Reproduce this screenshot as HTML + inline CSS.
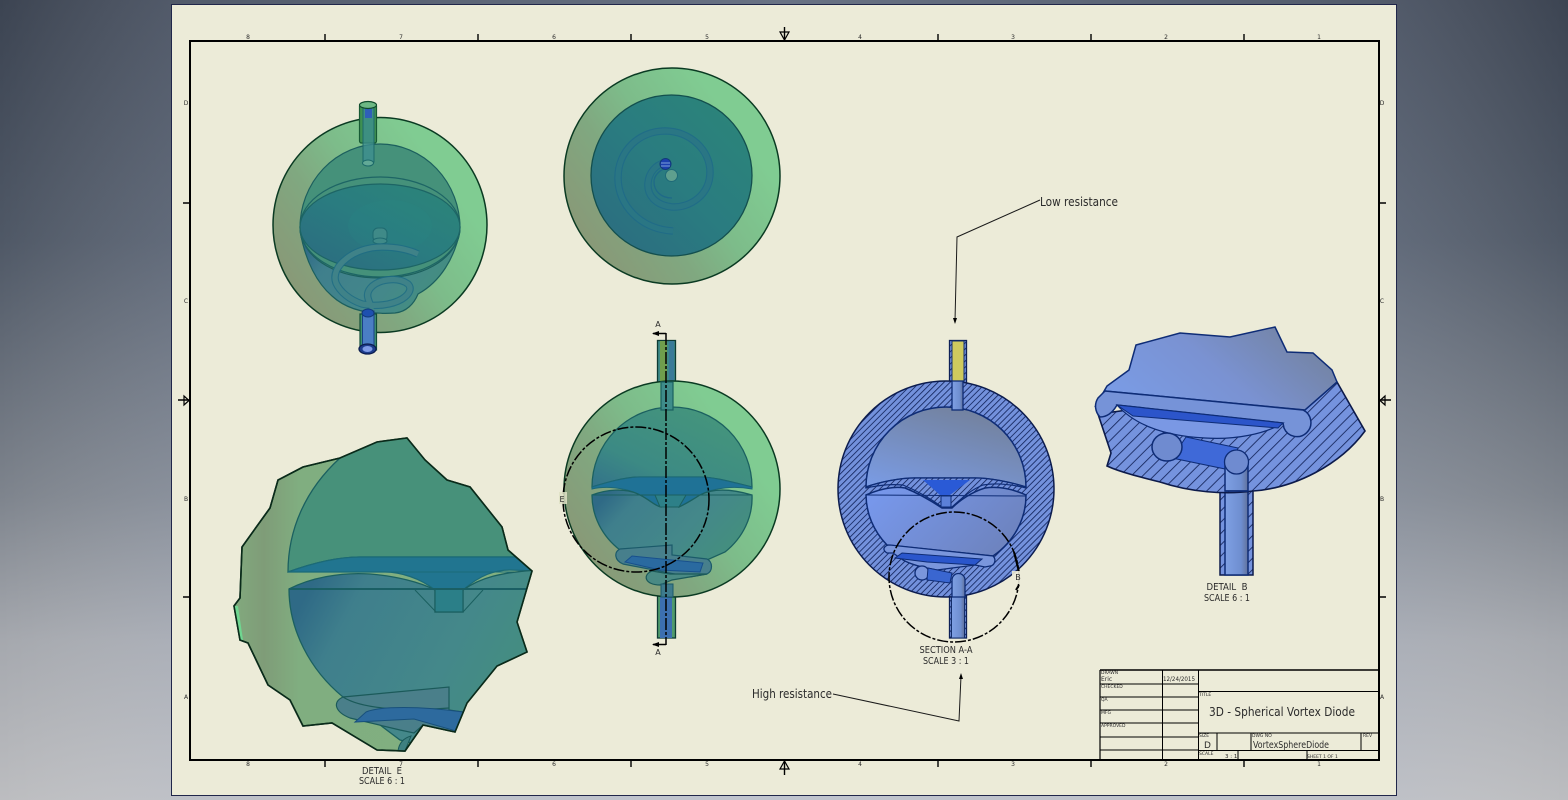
<!DOCTYPE html>
<html><head><meta charset="utf-8"><style>
html,body{margin:0;padding:0;width:1568px;height:800px;overflow:hidden;background:#7f848c}
svg{display:block;position:absolute;left:0;top:0;filter:blur(.3px)}
text{font-family:"DejaVu Sans","Liberation Sans",sans-serif;fill:#2b2b2b}
</style></head><body>
<svg width="1568" height="800" viewBox="0 0 1568 800" xmlns="http://www.w3.org/2000/svg">
<defs>
<linearGradient id="bgv" x1="0" y1="0" x2="0" y2="1"><stop offset="0" stop-color="#3c4452"/><stop offset=".3" stop-color="#4f5866"/><stop offset=".62" stop-color="#7e848d"/><stop offset=".8" stop-color="#a5a8ae"/><stop offset="1" stop-color="#bcbdc0"/></linearGradient>
<linearGradient id="bgh" x1="0" y1="0" x2="1" y2="0"><stop offset="0" stop-color="#fff" stop-opacity="0"/><stop offset=".12" stop-color="#c8d4ee" stop-opacity=".16"/><stop offset=".5" stop-color="#c8d4ee" stop-opacity=".32"/><stop offset=".88" stop-color="#c8d4ee" stop-opacity=".16"/><stop offset="1" stop-color="#fff" stop-opacity="0"/></linearGradient>
<linearGradient id="outer" x1=".05" y1=".7" x2=".75" y2=".2"><stop offset="0" stop-color="#889a78"/><stop offset=".35" stop-color="#80a880"/><stop offset=".62" stop-color="#7dbc8a"/><stop offset="1" stop-color="#80cc92"/></linearGradient>
<linearGradient id="inner" x1="0" y1="1" x2="1" y2="0"><stop offset="0" stop-color="#2c6a80"/><stop offset=".5" stop-color="#2a7c80"/><stop offset="1" stop-color="#2c8678"/></linearGradient>
<linearGradient id="dome" x1="0" y1="1" x2="1" y2="0"><stop offset="0" stop-color="#33728a"/><stop offset=".3" stop-color="#3c8a84"/><stop offset="1" stop-color="#47987a"/></linearGradient>
<linearGradient id="bowl" x1="0" y1=".3" x2="1" y2=".7"><stop offset="0" stop-color="#2f6a86"/><stop offset=".18" stop-color="#3f7f8c"/><stop offset=".6" stop-color="#44888a"/><stop offset="1" stop-color="#44907c"/></linearGradient>
<linearGradient id="detE" x1="0" y1="0" x2="1" y2="0"><stop offset="0" stop-color="#82aa7e"/><stop offset=".1" stop-color="#7f9c78"/><stop offset=".22" stop-color="#80ae80"/><stop offset="1" stop-color="#82b080"/></linearGradient>
<linearGradient id="blueT" x1="0" y1=".7" x2="1" y2=".3"><stop offset="0" stop-color="#7a9ce6"/><stop offset=".5" stop-color="#7a92d2"/><stop offset="1" stop-color="#73829f"/></linearGradient>
<linearGradient id="blueTS" x1="0" y1="1" x2=".6" y2="0"><stop offset="0" stop-color="#7a9ce6"/><stop offset="1" stop-color="#73829f"/></linearGradient>
<linearGradient id="blueB" x1="0" y1=".3" x2="1" y2=".7"><stop offset="0" stop-color="#7797ea"/><stop offset="1" stop-color="#6d82bc"/></linearGradient>
<linearGradient id="tube" x1="0" y1="0" x2="1" y2="0"><stop offset="0" stop-color="#7fa0e4"/><stop offset=".7" stop-color="#6e8ed0"/><stop offset="1" stop-color="#61719a"/></linearGradient>
<pattern id="h5" width="4.300" height="4.300" patternUnits="userSpaceOnUse" patternTransform="rotate(45)"><rect width="4.300" height="4.300" fill="#7391dc"/><rect width=".85" height="4.300" fill="#14265e"/></pattern>
<pattern id="h10" width="8" height="8" patternUnits="userSpaceOnUse" patternTransform="rotate(45)"><rect width="8" height="8" fill="#7593de"/><rect width=".85" height="8" fill="#14245a"/></pattern>
</defs>

<!-- background -->
<rect width="1568" height="800" fill="url(#bgv)"/>
<rect width="1568" height="800" fill="url(#bgh)"/>

<!-- sheet -->
<rect x="171.5" y="4.5" width="1225" height="791" fill="#ecebd8" stroke="#20264a" stroke-width="1"/>

<!-- frame -->
<rect x="190" y="41" width="1189" height="719" fill="none" stroke="#000" stroke-width="2"/>
<g stroke="#000" stroke-width="1.4" fill="none">
<path d="M325 34V41M478 34V41M631 34V41M938 34V41M1091 34V41M1244 34V41"/>
<path d="M325 760V767M478 760V767M631 760V767M938 760V767M1091 760V767M1244 760V767"/>
<path d="M183 203H190M183 597H190M1379 203H1386M1379 597H1386"/>
<path d="M784.500 27V41M784.500 760V775M178 400H190M1379 400H1391"/>
<path d="M780 32H789L784.500 40ZM780 769H789L784.500 761ZM184 396V405L189 400.500ZM1385 396V405L1380 400.500Z" stroke-width="1.2"/>
</g>
<g font-size="6" text-anchor="middle">
<text x="248" y="39">8</text><text x="401" y="39">7</text><text x="554" y="39">6</text><text x="707" y="39">5</text><text x="860" y="39">4</text><text x="1013" y="39">3</text><text x="1166" y="39">2</text><text x="1319" y="39">1</text>
<text x="248" y="766">8</text><text x="401" y="766">7</text><text x="554" y="766">6</text><text x="707" y="766">5</text><text x="860" y="766">4</text><text x="1013" y="766">3</text><text x="1166" y="766">2</text><text x="1319" y="766">1</text>
<text x="186" y="105">D</text><text x="186" y="303">C</text><text x="186" y="501">B</text><text x="186" y="699">A</text>
<text x="1382" y="105">D</text><text x="1382" y="303">C</text><text x="1382" y="501">B</text><text x="1382" y="699">A</text>
</g>

<!-- VIEW 1 : iso -->
<g>
<ellipse cx="380" cy="225" rx="107" ry="107.500" fill="url(#outer)" stroke="#0a3a22" stroke-width="1.500"/>
<path d="M300 228A80 84 0 0 1 460 228A80 52 0 0 1 300 228Z" fill="#45917a" stroke="#1c5f5e" stroke-width="1.200"/>
<path d="M300 230C305 262 318 284 332 296C345 308 365 315 395 313C406 312 414 304 418 294C440 282 455 258 460 230C455 262 420 278 380 278C340 278 305 262 300 230Z" fill="url(#bowl)" stroke="#1c5f5e" stroke-width="1.200"/>
<ellipse cx="380" cy="227" rx="80" ry="50" fill="none" stroke="#1d6565" stroke-width="1.200"/>
<ellipse cx="380" cy="227" rx="80" ry="43" fill="url(#inner)" stroke="#1d6565" stroke-width="1.200"/>
<ellipse cx="390" cy="226" rx="42" ry="26" fill="#2a8a86" opacity=".22"/>
<!-- small stub -->
<rect x="373" y="228" width="14" height="14" rx="5" fill="#3f8a88" stroke="#1f6a70"/>
<ellipse cx="380" cy="241" rx="7" ry="3" fill="#3f8a88" stroke="#1f6a70"/>
<!-- spiral -->
<g fill="none">
<path d="M418 254C405 248 392 247 382 247C368 247 354 252 346 259C337 266 333 275 336 283C340 292 350 300 362 304C375 307 392 305 402 299C410 294 412 288 408 284C400 278 390 279 382 281C372 284 366 291 368 298C369 302 371 306 373 309" stroke="#1f6c84" stroke-width="7.500" stroke-opacity=".85"/>
<path d="M418 254C405 248 392 247 382 247C368 247 354 252 346 259C337 266 333 275 336 283C340 292 350 300 362 304C375 307 392 305 402 299C410 294 412 288 408 284C400 278 390 279 382 281C372 284 366 291 368 298C369 302 371 306 373 309" stroke="#3f8288" stroke-width="5.300"/>
</g>
<!-- tubes -->
<rect x="359.500" y="104" width="17" height="39" rx="2" fill="#3e9052" stroke="#165a34" stroke-width="1.200"/>
<rect x="363" y="104" width="11" height="62" rx="5" fill="#3e8f92" fill-opacity=".75" stroke="#1d6a6a"/>
<rect x="365" y="108" width="7" height="10" fill="#2f5fb8"/>
<ellipse cx="368" cy="105" rx="8.500" ry="3.500" fill="#6db884" stroke="#0f4a2c" stroke-width="1.200"/>
<ellipse cx="368" cy="163" rx="5.500" ry="3" fill="#62a996" stroke="#1d6a6a"/>
<rect x="360" y="314" width="16.500" height="36" fill="#3e8f74" stroke="#114c38" stroke-width="1.200"/>
<rect x="362.500" y="311" width="11.500" height="39" fill="#4a7ec4" stroke="#1a3f86"/>
<ellipse cx="368" cy="313" rx="6" ry="4" fill="#1e50b0" stroke="#123a78"/>
<ellipse cx="367.500" cy="349" rx="8.500" ry="5" fill="#1d3d8e" stroke="#0d1e50" stroke-width="1.300"/>
<ellipse cx="367.500" cy="349" rx="5" ry="3" fill="#7f9be6"/>
</g>

<!-- VIEW 2 : top -->
<g>
<ellipse cx="672" cy="176" rx="108" ry="108" fill="url(#outer)" stroke="#0a3a22" stroke-width="1.500"/>
<circle cx="671.500" cy="175.500" r="80.500" fill="url(#inner)" stroke="#134f4e" stroke-width="1.300"/>
<g fill="none">
<path d="M673 231C640 229 618 205 618 178C618 150 640 131 665 131C690 131 710 150 710 172C710 195 690 208 672 207C655 205 647 195 648 183C649 172 656 165 664 163" stroke="#1f6a88" stroke-width="7.500" stroke-opacity=".85"/>
<path d="M673 231C640 229 618 205 618 178C618 150 640 131 665 131C690 131 710 150 710 172C710 195 690 208 672 207C655 205 647 195 648 183C649 172 656 165 664 163" stroke="#2a7684" stroke-width="5.300"/>
<path d="M672 198C660 198 654 190 654 182C654 175 660 170 666 168" stroke="#1f6a88" stroke-width="1.300"/>
</g>
<circle cx="671.500" cy="175.500" r="6" fill="#5f9f8e" stroke="#1f6a78"/>
<circle cx="665.500" cy="164" r="5.500" fill="#1c3fae" stroke="#123a78"/>
<path d="M661 163H670M661 166H670" stroke="#7ea0d8" stroke-width="1"/>
</g>

<!-- VIEW 3 : front -->
<g>
<rect x="657.500" y="340.500" width="18" height="45" fill="#3e8a88" stroke="#0e3a34" stroke-width="1.300"/>
<rect x="660" y="341" width="7" height="44" fill="#6f9e4c"/>
<rect x="669" y="341" width="5" height="44" fill="#3a7a98"/>
<rect x="657.500" y="596" width="18" height="42" fill="#4f9a6c" stroke="#0e3a34" stroke-width="1.300"/>
<rect x="660" y="597" width="12" height="41" fill="#3c6fb0"/>
<circle cx="672" cy="489" r="108" fill="url(#outer)" stroke="#0a3a22" stroke-width="1.500"/>
<path d="M592 487A80 80 0 0 1 752 487C735 483 715 477 700 477H640C625 477 605 483 592 487Z" fill="url(#dome)" stroke="#1b6060" stroke-width="1.300"/>
<rect x="661" y="382" width="12" height="28" fill="#3e8c8a" stroke="#1b6060" stroke-width="1.200"/>
<path d="M592 487C605 483 625 477 640 477H700C715 477 735 483 752 487L752 489C735 486 715 487 700 495C695 498 688 502 679 507H659C650 502 645 498 640 495C625 487 605 486 592 489Z" fill="#1f7296" stroke="#1b6878" stroke-width="1"/>
<path d="M592 495C605 490 625 487 640 495C650 500 655 506 661 507V500H679V507C688 503 695 498 700 495C715 487 735 490 752 495A80 72 0 0 1 725 552L707 560L620 550A80 72 0 0 1 592 495Z" fill="url(#bowl)" stroke="#1b6060" stroke-width="1.300"/>
<path d="M592 495H752" fill="none" stroke="#1b6060" stroke-width="1"/>
<path d="M655 495L660 507H679L686 495Z" fill="#2d8088" stroke="#1b6060"/>
<!-- channels -->
<path d="M620 549L672 545V555L707 559C713 562 713 571 707 574L690 577L623 564C614 560 614 552 620 549Z" fill="#477f8c" stroke="#1b5a6a" stroke-width="1.200"/>
<path d="M625 562L632 556L703 563L700 572L660 570Z" fill="#2a6aa0" stroke="#18508c"/>
<path d="M652 571L670 574L707 574L672 580L660 585C645 585 642 575 652 571Z" fill="#4a8a84" stroke="#1b5a5a" stroke-width="1.200"/>
<rect x="661" y="584" width="12" height="13" fill="#3d7a8c" stroke="#1b5a6a"/>
</g>

<!-- Section marks for view 3 -->
<g fill="none" stroke="#000">
<path d="M666 333V645" stroke-width="1.500" stroke-dasharray="12 2 3 2"/>
<path d="M653 333.500H666M653 644.500H666" stroke-width="1.500"/>
</g>
<path d="M652 333.500L659 331V336ZM652 644.500L659 642V647Z" fill="#000"/>
<text x="658" y="327" font-size="8" text-anchor="middle" fill="#444">A</text>
<text x="658" y="655" font-size="8" text-anchor="middle" fill="#444">A</text>
<ellipse cx="636" cy="499.500" rx="73" ry="72.500" fill="none" stroke="#000" stroke-width="1.500" stroke-dasharray="11 2 3 2"/>
<rect x="559" y="492" width="8" height="12" fill="#dfe2c6" opacity=".85"/>
<text x="562" y="502" font-size="8" text-anchor="middle" fill="#444">E</text>

<!-- SECTION VIEW -->
<g>
<rect x="949.500" y="340.500" width="17" height="45" fill="url(#h5)" stroke="#0d2058" stroke-width="1.300"/>
<rect x="952" y="341" width="12" height="44" fill="#cfca5e" stroke="#142e6a" stroke-width="1"/>
<rect x="949.500" y="596" width="17" height="42" fill="url(#h5)" stroke="#0d2058" stroke-width="1.300"/>
<rect x="951.500" y="596" width="13" height="42" fill="url(#tube)" stroke="#142e6a" stroke-width="1"/>
<circle cx="946" cy="489" r="108" fill="url(#h5)" stroke="#0c1c4e" stroke-width="1.500"/>
<path d="M866 487A80 80 0 0 1 1026 487C1010 482 990 478 975 478H915C900 478 880 482 866 487Z" fill="url(#blueTS)" stroke="#0e2c76" stroke-width="1.500"/>
<rect x="952" y="381" width="11" height="29" fill="url(#tube)" stroke="#0e2c76" stroke-width="1.300"/>
<path d="M866 487C880 482 900 478 915 478H975C990 478 1010 482 1026 487L1026 488C1010 484 995 483 983 485C970 490 960 500 952 507H942C930 498 915 490 903 485C890 484 880 485 866 488Z" fill="url(#h5)" stroke="#0e2c76" stroke-width="1.200"/>
<path d="M923 480H970L950 495H940Z" fill="#2a5ad6"/>
<path d="M941 496H951V507H941Z" fill="#5b80d8" stroke="#0e2c76"/>
<path d="M866 495C880 489 893 486 905 488C915 492 930 500 942 508H952C960 500 972 492 985 488C1000 486 1015 490 1026 495A80 75 0 0 1 993 556L887 545A80 75 0 0 1 866 495Z" fill="url(#blueB)" stroke="#0e2c76" stroke-width="1.500"/>
<path d="M866 495L1026 496" stroke="#0e2c76" stroke-width="1"/>
<!-- channel -->
<path d="M890 545L993 556C997 560 994 566 990 566L985 567L975 565L937 570C925 568 912 565 903 560L893 553L887 553C881 549 885 545 890 545Z" fill="#7a96dc" stroke="#0e2c76" stroke-width="1.300"/>
<path d="M895 558L902 553L982 559L975 565L927 562Z" fill="#2a56cc" stroke="#0e2c76" stroke-width="1"/>
<circle cx="922" cy="573" r="7" fill="#7a96dc" stroke="#0e2c76" stroke-width="1.300"/>
<path d="M928 568L952 573L950 583L927 580Z" fill="#3a66d0" stroke="#0e2c76"/>
<path d="M952 597V580A6.500 6.500 0 0 1 965 580V597Z" fill="url(#tube)" stroke="#0e2c76" stroke-width="1.300"/>
</g>
<circle cx="954" cy="577" r="65" fill="none" stroke="#000" stroke-width="1.500" stroke-dasharray="11 2 3 2"/>
<path d="M1014 552L1019 572M1016 590L1019 585" stroke="#000" stroke-width="2"/>
<rect x="1012" y="571" width="14" height="13" fill="#ecebd8" opacity=".9"/>
<text x="1018" y="580" font-size="8" text-anchor="middle" fill="#444">B</text>

<!-- labels / leaders -->
<g fill="none" stroke="#1a1a1a" stroke-width="1">
<path d="M1040 200L957 237L955 321"/>
<path d="M833 694L959 721L961 676"/>
</g>
<path d="M955 324L953 318H957ZM961 673L959 679H963Z" fill="#000"/>
<text x="1040" y="206" font-size="12" textLength="78" lengthAdjust="spacingAndGlyphs">Low resistance</text>
<text x="752" y="698" font-size="12" textLength="80" lengthAdjust="spacingAndGlyphs">High resistance</text>
<g font-size="9.500" text-anchor="middle">
<text x="946" y="653" textLength="53" lengthAdjust="spacingAndGlyphs">SECTION A-A</text>
<text x="946" y="664" textLength="46" lengthAdjust="spacingAndGlyphs">SCALE 3 : 1</text>
<text x="1227" y="590" textLength="41" lengthAdjust="spacingAndGlyphs" xml:space="preserve">DETAIL  B</text>
<text x="1227" y="601" textLength="46" lengthAdjust="spacingAndGlyphs">SCALE 6 : 1</text>
<text x="382" y="774" textLength="40" lengthAdjust="spacingAndGlyphs" xml:space="preserve">DETAIL  E</text>
<text x="382" y="784" textLength="46" lengthAdjust="spacingAndGlyphs">SCALE 6 : 1</text>
</g>

<!-- DETAIL E -->
<g>
<clipPath id="cE"><path d="M407 438L425 460L447 480L470 487L502 527L508 550L532 571L517 622L527 652L497 666L467 703L455 732L423 725L405 751L377 750L332 723L303 726L290 700L268 685L248 643L240 640L234 606L240 598L242 547L270 508L278 480L303 467L340 458L377 442Z"/></clipPath>
<path d="M407 438L425 460L447 480L470 487L502 527L508 550L532 571L517 622L527 652L497 666L467 703L455 732L423 725L405 751L377 750L332 723L303 726L290 700L268 685L248 643L240 640L234 606L240 598L242 547L270 508L278 480L303 467L340 458L377 442Z" fill="url(#detE)" stroke="#0f3a22" stroke-width="1.600"/>
<g clip-path="url(#cE)">
<path d="M234 606L240 640L243 640L238 606Z" fill="#6fd690"/>
<path d="M340 458C305 490 288 530 288 572C310 564 335 557 360 557H560V430H340Z" fill="#47917a" stroke="#1b6060" stroke-width="1.300"/>
<path d="M288 572C310 564 335 557 360 557H540V571L510 570C495 570 480 575 463 590H435C420 578 400 572 385 572Z" fill="#217590" stroke="#1b6a78" stroke-width="1.200"/>
<path d="M288 572H540" stroke="#1b6a78" stroke-width="1"/>
<path d="M289 589C310 578 340 572 370 574C395 576 420 582 435 590V612H463V590C480 578 500 572 540 570V760H480L400 740L343 697C310 670 289 630 289 589Z" fill="url(#bowl)" stroke="#1b6060" stroke-width="1.300"/>
<path d="M289 589H540" stroke="#1a5f64" stroke-width="2"/>
<path d="M435 590V612H463V590" fill="#2b7f88" stroke="#1b6060" stroke-width="1.200"/>
<path d="M415 590L436 612M483 590L463 612" stroke="#1b6060" stroke-width="1" fill="none"/>
<path d="M343 697L449 687V710L463 712L455 732L423 725L414 733L400 730L350 718C335 712 332 702 343 697Z" fill="#4a7f8a" stroke="#1b5a5a" stroke-width="1.200"/>
<path d="M343 697C360 708 400 712 449 708" fill="none" stroke="#1b5a5a" stroke-width="1.200"/>
<path d="M355 722L366 712C380 706 420 706 463 712L456 731L414 719Z" fill="#2d6a9e" stroke="#18507c" stroke-width="1"/>
<path d="M398 751C399 743 404 738 411 736L405 751Z" fill="#3e8080" stroke="#1b5a5a"/>
</g>
<path d="M407 438L425 460L447 480L470 487L502 527L508 550L532 571L517 622L527 652L497 666L467 703L455 732L423 725L405 751L377 750L332 723L303 726L290 700L268 685L248 643L240 640L234 606L240 598L242 547L270 508L278 480L303 467L340 458L377 442Z" fill="none" stroke="#0a2a1a" stroke-width="1.600"/>
</g>

<!-- DETAIL B -->
<g>
<rect x="1220" y="490" width="33" height="85" fill="url(#h10)" stroke="#0c1a4a" stroke-width="1.500"/>
<rect x="1225" y="490" width="23" height="85" fill="url(#tube)" stroke="#0e2c76" stroke-width="1.500"/>
<path d="M1337 382L1365 431C1340 465 1295 488 1253 491C1225 495 1190 492 1160 482C1140 477 1120 472 1107 466L1111 453L1098 414Z" fill="url(#h10)" stroke="#0c1a4a" stroke-width="1.600"/>
<path d="M1275 327L1287 352L1313 353L1332 370L1337 382L1305 410L1105 391L1095 407L1107 386L1129 370L1136 345L1180 333L1230 337Z" fill="url(#blueT)" stroke="#0e2c76" stroke-width="1.500"/>
<path d="M1105 391L1303 410A14 14 0 1 1 1284 428L1283 423L1117 405C1113 412 1108 417 1100 417C1095 412 1094 404 1098 398Z" fill="#7693d8" stroke="#0e2c76" stroke-width="1.500"/>
<path d="M1117 405L1283 423C1265 434 1235 440 1205 438C1165 436 1135 425 1117 405Z" fill="#7a98e4" stroke="#0e2c76" stroke-width="1.200"/>
<path d="M1117 405L1283 423L1278 428L1133 416Z" fill="#2c55ca" stroke="#0e2c76" stroke-width="1"/>
<path d="M1186 437L1238 448L1230 470L1172 458Z" fill="#3f69d8" stroke="#0e2c76" stroke-width="1"/>
<ellipse cx="1167" cy="447" rx="15" ry="14" fill="#6f8bd0" stroke="#0e2c76" stroke-width="1.500"/>
<path d="M1225 491V462C1225 447 1248 447 1248 462V491Z" fill="url(#tube)" stroke="#0e2c76" stroke-width="1.500"/>
<ellipse cx="1236.500" cy="462" rx="12" ry="12" fill="#6f8bd0" stroke="#0e2c76" stroke-width="1.300"/>
<path d="M1225 491H1248" stroke="#0e2c76" stroke-width="1.500"/>
</g>

<!-- TITLE BLOCK -->
<g fill="none" stroke="#000">
<path d="M1100 670V760" stroke-width="1.200"/>
<path d="M1100 670H1379" stroke-width="1.600"/>
<path d="M1162.500 670V760M1198.500 670V760" stroke-width="1"/>
<path d="M1100 684H1198M1100 697H1198M1100 710H1198M1100 723H1198M1100 737H1198M1100 750H1198" stroke-width="1"/>
<path d="M1198 691.500H1379M1198 733H1379M1198 750.500H1379" stroke-width="1"/>
<path d="M1217 733V750M1251 733V750M1361 733V750M1238 750V760M1307 750V760" stroke-width="1"/>
</g>
<g font-size="4.500" fill="#222">
<text x="1101" y="674">DRAWN</text><text x="1101" y="688">CHECKED</text><text x="1101" y="701">QA</text><text x="1101" y="714">MFG</text><text x="1101" y="727">APPROVED</text>
<text x="1199" y="696">TITLE</text><text x="1199" y="737">SIZE</text><text x="1252" y="737">DWG NO</text><text x="1363" y="737">REV</text><text x="1199" y="755">SCALE</text><text x="1307" y="758">SHEET 1  OF 1</text>
</g>
<text x="1101" y="681" font-size="6">Eric</text>
<text x="1163" y="681" font-size="6" textLength="32" lengthAdjust="spacingAndGlyphs">12/24/2015</text>
<text x="1209" y="716" font-size="12.500" textLength="146" lengthAdjust="spacingAndGlyphs">3D - Spherical Vortex Diode</text>
<text x="1204" y="748" font-size="9">D</text>
<text x="1253" y="748" font-size="9.500" textLength="76" lengthAdjust="spacingAndGlyphs">VortexSphereDiode</text>
<text x="1225" y="758" font-size="5.500">3 : 1</text>
</svg>
</body></html>
